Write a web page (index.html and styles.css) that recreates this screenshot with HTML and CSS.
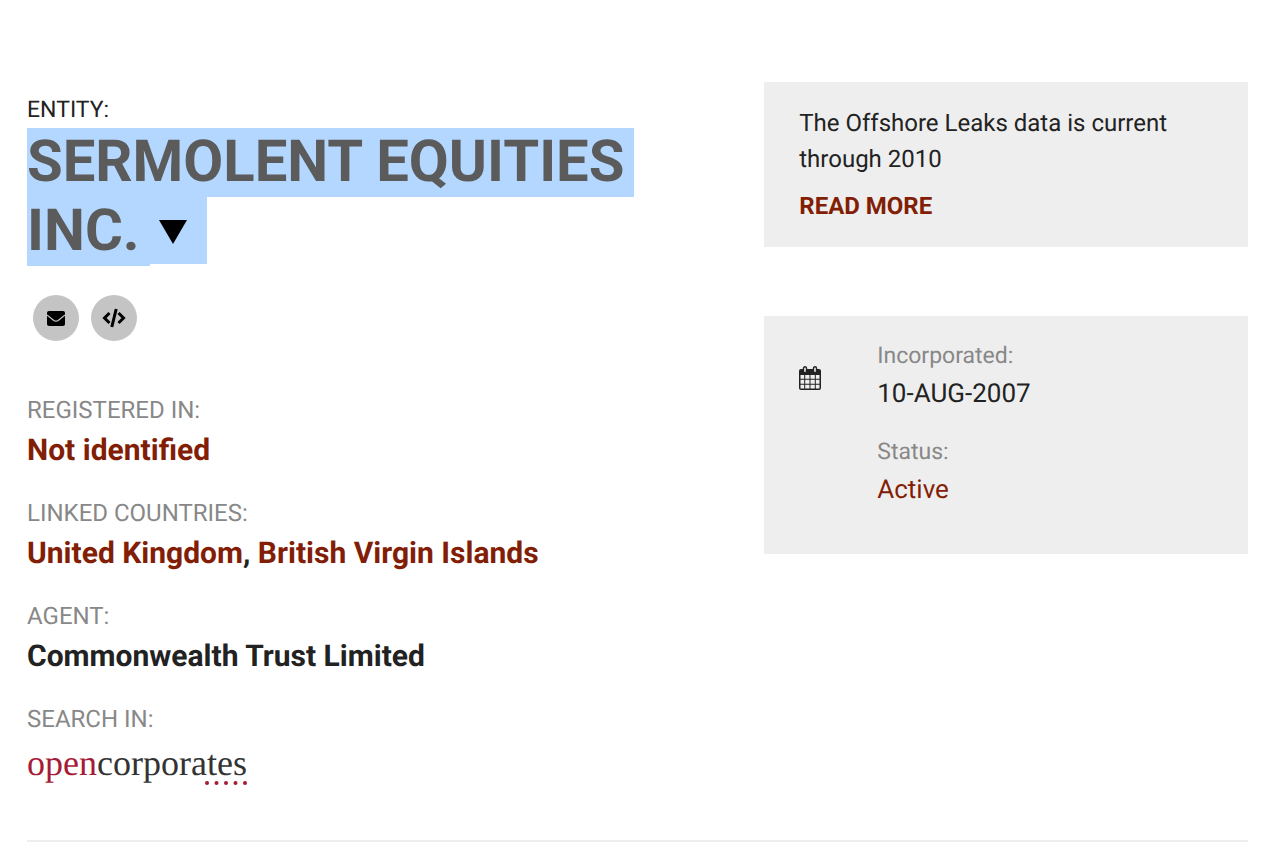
FILE: index.html
```html
<!DOCTYPE html>
<html lang="en">
<head>
<meta charset="utf-8">
<meta name="viewport" content="width=device-width, initial-scale=1">
<title>SERMOLENT EQUITIES INC.</title>
<link rel="stylesheet" href="styles.css">
</head>
<body>
<main class="entity">
  <section class="summary">
    <p class="kind">ENTITY:</p>
    <h1 class="name"><span class="selected">SERMOLENT EQUITIES INC.</span><button class="toggle" type="button" aria-label="Show details"><svg width="28" height="24" viewBox="0 0 28 24"><path d="M0 0h28L14 24z"/></svg></button></h1>
    <div class="share">
      <button class="round" type="button" aria-label="Email"><svg width="18" height="15" viewBox="0 0 18 15"><path d="M2 0h14q2 0 2 2v11q0 2-2 2H2q-2 0-2-2V2q0-2 2-2z"/><path d="M0 4l6.500 5.200q2.500 2 5 0L18 4" fill="none" stroke="#c4c4c4" stroke-width="1.200"/></svg></button>
      <button class="round" type="button" aria-label="Embed"><svg width="24" height="20" viewBox="0 0 24 20" fill="none" stroke="#000" stroke-width="3"><path d="M7.500 5L2.500 10l5 5M16.500 5l5 5-5 5"/><path d="M14.200 1L9.800 19"/></svg></button>
    </div>
    <dl class="facts">
      <div class="fact"><dt>REGISTERED IN:</dt><dd><a href="#">Not identified</a></dd></div>
      <div class="fact"><dt>LINKED COUNTRIES:</dt><dd><a href="#">United Kingdom</a>, <a href="#">British Virgin Islands</a></dd></div>
      <div class="fact"><dt>AGENT:</dt><dd>Commonwealth Trust Limited</dd></div>
      <div class="fact"><dt>SEARCH IN:</dt><dd><a class="logo" href="#"><span class="logo-open">open</span>corporates<svg class="dots" width="42" height="4" viewBox="0 0 42 4"><circle cx="2" cy="2" r="2"/><circle cx="11.500" cy="2" r="2"/><circle cx="21" cy="2" r="2"/><circle cx="30.500" cy="2" r="2"/><circle cx="40" cy="2" r="2"/></svg></a></dd></div>
    </dl>
  </section>
  <aside class="side">
    <section class="card notice">
      <p>The Offshore Leaks data is current through 2010</p>
      <a class="more" href="#">READ MORE</a>
    </section>
    <section class="card details">
      <svg class="calendar" width="22" height="24" viewBox="0 0 22 24"><path d="M2 3h18q2 0 2 2v17q0 2-2 2H2q-2 0-2-2V5q0-2 2-2z" fill="#222"/><path d="M1.500 9h3.700v3.800H1.500zM6.200 9h4.300v3.800H6.200zM11.500 9h4.300v3.800h-4.300zM16.800 9h3.700v3.800h-3.700zM1.500 13.800h3.700v4H1.500zM6.200 13.800h4.300v4H6.200zM11.500 13.800h4.300v4h-4.300zM16.800 13.800h3.700v4h-3.700zM1.500 18.800h3.700v3.700H1.500zM6.200 18.800h4.300v3.700H6.200zM11.500 18.800h4.300v3.700h-4.300zM16.800 18.800h3.700v3.700h-3.700z" fill="#eee"/><rect x="4.500" y=".7" width="3" height="6" rx="1.500" fill="#eee" stroke="#222" stroke-width="1.400"/><rect x="14.500" y=".7" width="3" height="6" rx="1.500" fill="#eee" stroke="#222" stroke-width="1.400"/></svg>
      <dl class="dates">
        <div><dt>Incorporated:</dt><dd>10-AUG-2007</dd></div>
        <div><dt>Status:</dt><dd><a href="#">Active</a></dd></div>
      </dl>
    </section>
  </aside>
</main>
</body>
</html>
```
FILE: styles.css
```css
* {
  box-sizing: border-box;
}

body {
  margin: 0;
  background: #fff;
  color: #222;
  font-family: Roboto, "Liberation Sans", sans-serif;
  font-size: 24px;
  line-height: 36px;
  text-rendering: geometricPrecision;
}

p, h1, dl, dd {
  margin: 0;
}

a {
  color: #821e06;
  text-decoration: none;
}

button {
  padding: 0;
  border: 0;
  cursor: pointer;
}

.entity {
  display: grid;
  grid-template-columns: minmax(0, 7fr) minmax(0, 5fr);
  gap: 60px;
  margin: 0 32px 0 27px;
  padding: 82px 0 51px;
  border-bottom: 2px solid #eee;
}

.summary {
  padding-top: 10px;
}

.kind {
  font-size: 23px;
}

.name {
  color: #5b5b5b;
  font-size: 58px;
  line-height: 69px;
}

.selected {
  padding: 0 10px 1px 0;
  background: #b3d7ff;
  -webkit-box-decoration-break: clone;
  box-decoration-break: clone;
}

.toggle {
  width: 57px;
  height: 67px;
  padding: 2px 20px 0 9px;
  background: #b3d7ff;
  vertical-align: top;
}

.toggle svg {
  display: block;
}

.share {
  display: flex;
  gap: 12px;
  padding: 29px 6px 51px;
}

.round {
  display: grid;
  place-items: center;
  width: 46px;
  height: 46px;
  border-radius: 50%;
  background: #c4c4c4;
}

.facts {
  display: grid;
  gap: 21px;
}

dt {
  color: #888;
  line-height: 36px;
}

.fact dd {
  font-size: 30px;
  font-weight: 700;
  line-height: 46px;
}

.logo {
  position: relative;
  display: inline-block;
  padding-top: 3px;
  color: #333;
  font-family: "Liberation Serif", serif;
  font-size: 36px;
  font-weight: 400;
}

.logo-open {
  color: #a51c36;
}

.dots {
  position: absolute;
  right: 0;
  bottom: 1px;
  fill: #a51c36;
}

.side {
  display: grid;
  align-content: start;
  gap: 69px;
}

.card {
  padding: 23px 35px;
  background: #eee;
}

.notice {
  padding-bottom: 12px;
}

.more {
  display: block;
  padding: 11px 0;
  font-weight: 700;
}

.details {
  display: flex;
  gap: 56px;
  padding-bottom: 43px;
}

.calendar {
  margin-top: 27px;
}

.dates {
  display: grid;
  gap: 20px;
}

.dates dt {
  font-size: 23px;
  line-height: 34px;
}

.dates dd {
  font-size: 26px;
  line-height: 42px;
}
```
